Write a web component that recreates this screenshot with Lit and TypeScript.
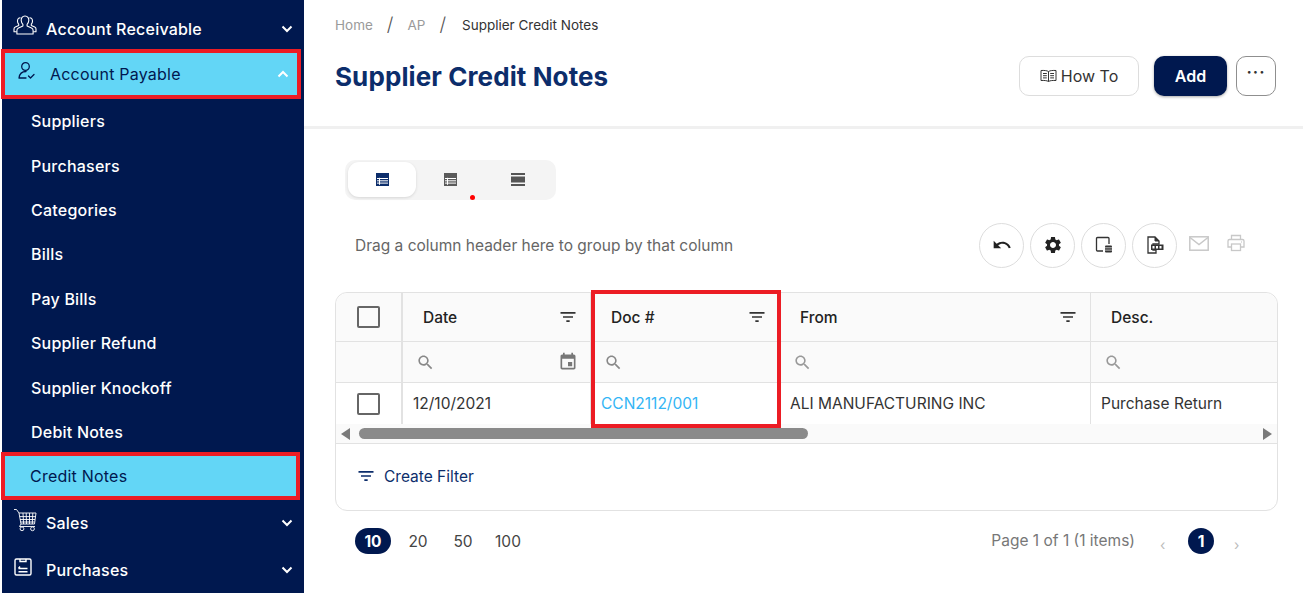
import { LitElement, html, css, svg } from "lit";
import { customElement } from "lit/decorators.js";

const filterP = "M10 18h4v-2h-4v2zM3 6v2h18V6H3zm3 7h12v-2H6v2z";
const searchP = "M15.5 14h-.79l-.28-.27C15.41 12.59 16 11.11 16 9.5 16 5.91 13.09 3 9.5 3S3 5.91 3 9.5 5.91 16 9.5 16c1.61 0 3.09-.59 4.23-1.57l.27.28v.79l5 4.99L20.49 19l-4.99-5zm-6 0C7.01 14 5 11.99 5 9.5S7.01 5 9.5 5 14 7.01 14 9.5 11.99 14 9.5 14z";
const eventP = "M17 12h-5v5h5v-5zM16 1v2H8V1H6v2H5c-1.11 0-1.99.9-1.99 2L3 19c0 1.1.89 2 2 2h14c1.1 0 2-.9 2-2V5c0-1.1-.9-2-2-2h-1V1h-2zm3 18H5V8h14v11z";
const undoP = "M12.5 8c-2.65 0-5.05.99-6.9 2.6L2 7v9h9l-3.62-3.62c1.39-1.16 3.16-1.88 5.12-1.88 3.54 0 6.55 2.31 7.6 5.5l2.37-.78C21.08 11.03 17.15 8 12.5 8z";
const gearP = "M19.14 12.94c.04-.3.06-.61.06-.94 0-.32-.02-.64-.07-.94l2.03-1.58c.18-.14.23-.41.12-.61l-1.92-3.32c-.12-.22-.37-.29-.59-.22l-2.39.96c-.5-.38-1.03-.7-1.62-.94l-.36-2.54c-.04-.24-.24-.41-.48-.41h-3.84c-.24 0-.43.17-.47.41l-.36 2.54c-.59.24-1.13.57-1.62.94l-2.39-.96c-.22-.08-.47 0-.59.22L2.74 8.87c-.12.21-.08.47.12.61l2.03 1.58c-.05.3-.09.63-.09.94s.02.64.07.94l-2.03 1.58c-.18.14-.23.41-.12.61l1.92 3.32c.12.22.37.29.59.22l2.39-.96c.5.38 1.03.7 1.62.94l.36 2.54c.05.24.24.41.48.41h3.84c.24 0 .44-.17.47-.41l.36-2.54c.59-.24 1.13-.56 1.62-.94l2.39.96c.22.08.47 0 .59-.22l1.92-3.32c.12-.22.07-.47-.12-.61l-2.01-1.58zM12 15.6c-1.98 0-3.6-1.62-3.6-3.6s1.62-3.6 3.6-3.6 3.6 1.62 3.6 3.6-1.62 3.6-3.6 3.6z";

const icon = (d: string, size: number, color: string) => html`<svg width=${size} height=${size} viewBox="0 0 24 24" fill=${color}><path d=${d}></path></svg>`;
const chev = (up: boolean) => html`<svg class="chev" width="12" height="8" viewBox="0 0 12 8" fill="none" stroke="#fff" stroke-width="2"><path d=${up ? "M1.5 6.5 6 2l4.5 4.5" : "M1.5 1.5 6 6l4.5-4.5"}></path></svg>`;

const iconReceivable = html`<svg width="24" height="24" viewBox="0 0 24 24" fill="none" stroke="#fff" stroke-width="1.1" stroke-linejoin="round"><path d="M12 2c-2.6 0-4 2-3.800 4.500.1 1.700.9 3 1.700 3.800v1.700l-4.400 2c-1.100.5-1.600 1.400-1.600 2.500v3.500h16.200V16.500c0-1.100-.5-2-1.600-2.500l-4.400-2v-1.700c.8-.8 1.600-2.100 1.700-3.800C16 4 14.600 2 12 2z"></path><path d="M7.500 3.800C5.600 3.900 4.400 5.400 4.500 7.400c.1 1.200.6 2.200 1.200 2.800v1.300L2.300 13c-.9.4-1.300 1.100-1.300 2v2.800h2.700M16.500 3.800c1.900.1 3.100 1.600 3 3.600-.1 1.200-.6 2.200-1.200 2.800v1.300l3.400 1.500c.9.4 1.300 1.100 1.300 2v2.800h-2.700"></path></svg>`;
const iconPayable = html`<svg width="20" height="20" viewBox="0 0 20 20" fill="none" stroke="#00184f" stroke-width="1.300" stroke-linecap="round" stroke-linejoin="round"><circle cx="8.500" cy="5.500" r="3.800"></circle><path d="M2 17c.5-4 3-6.500 7-6.500M2 17h7"></path><path d="M11.500 15l2 2 3.500-3.500"></path></svg>`;
const iconSales = html`<svg width="26" height="24" viewBox="0 0 26 24" fill="none" stroke="#fff" stroke-width=".9"><path d="M1 1.500h2.500l2.500 3.500M6 5h17l-1.500 11H8z"></path><path d="M6.500 8.600h16M7 11.500h15M7.500 14h14M10 5l.6 11M13.200 5l.3 11M16.500 5v11M19.800 5l-.5 11"></path><path d="M8 16l-1.500 2.500H22"></path><circle cx="9" cy="20.800" r="1.900"></circle><circle cx="19.500" cy="20.800" r="1.900"></circle></svg>`;
const iconPurch = html`<svg width="20" height="20" viewBox="0 0 20 20" fill="none" stroke="#fff" stroke-width="1.400"><rect x="2" y="2" width="16" height="16" rx="1.500"></rect><path d="M7 2v2.500h6V2M5.500 11.500h9M5.500 14.800h9M7 9.500l-1.500 2"></path></svg>`;
const iconBook = html`<svg width="17" height="14" viewBox="0 0 17 14" fill="none" stroke="#333" stroke-width="1"><path d="M8.500 2.500C7 1.500 4 1.300 1 1.500v10c3-.2 6 0 7.500 1 1.500-1 4.500-1.200 7.500-1v-10c-3-.2-6 0-7.500 1zM8.500 2.500v10"></path><path d="M3 4.500h3.800M3 6.700h3.800M3 8.900h3.800M10.200 4.500H14M10.200 6.700H14M10.200 8.900H14"></path></svg>`;
const gridIcon = (c: string) => html`<svg width="13" height="13" viewBox="0 0 13 13"><rect width="13" height="13" fill=${c}></rect><path d="M3.500 4.800v7M1 5.500h11M1 7.800h11M1 10.100h11" stroke="#fff" stroke-width="1" fill="none"></path></svg>`;
const rowsIcon = html`<svg width="14" height="13" viewBox="0 0 14 13" fill="#555"><rect width="14" height="2"></rect><rect y="3.500" width="14" height="6"></rect><rect y="11" width="14" height="2"></rect></svg>`;
const columnIcon = html`<svg width="18" height="18" viewBox="0 0 18 18" fill="none"><path d="M8 15H2.500a1 1 0 0 1-1-1V2.500a1 1 0 0 1 1-1H13a1 1 0 0 1 1 1V8" stroke="#333" stroke-width="1.300"></path><rect x="10" y="9.500" width="7" height="7" rx="1" fill="#333"></rect><path d="M10 11.800h7M10 14.100h7" stroke="#fff" stroke-width=".7"></path></svg>`;
const exportIcon = html`<svg width="18" height="18" viewBox="0 0 18 18"><path d="M2 1h7l4 4v3H7v6h3v3H2z" fill="none" stroke="#333" stroke-width="1.300"></path><path d="M9 1v4h4" fill="#333" stroke="#333"></path><rect x="5" y="8.500" width="12.500" height="5.500" fill="#333"></rect><path d="M6.500 10h2v2.500h-2zM10 10h2v2.500h-2zM13.500 10h2v2.500h-2z" fill="#fff"></path></svg>`;
const mailIcon = html`<svg width="20" height="15" viewBox="0 0 20 15" fill="none" stroke="#c8c8c8" stroke-width="1.500"><rect x=".8" y=".8" width="18.400" height="13.400"></rect><path d="M1 1.500l9 7 9-7"></path></svg>`;
const printIcon = html`<svg width="18" height="18" viewBox="0 0 18 18" fill="none" stroke="#c8c8c8" stroke-width="1.300"><path d="M4.500 5.500V1.500h9v4M4.500 13H1V7a1.500 1.500 0 0 1 1.500-1.500h13A1.500 1.500 0 0 1 17 7v6h-3.500"></path><rect x="4.500" y="10" width="9" height="6.500"></rect><path d="M14 8h.8"></path></svg>`;

const subs = ["Suppliers", "Purchasers", "Categories", "Bills", "Pay Bills", "Supplier Refund", "Supplier Knockoff", "Debit Notes"];

@customElement("app-root")
export class AppRoot extends LitElement {
  static styles = css`
    :host { display: block; width: 1303px; height: 593px; overflow: hidden; font-family: "Inter", "Liberation Sans", sans-serif; background: #fff; color: #333; }
    * { box-sizing: border-box; }
    .page { display: flex; height: 593px; }

    .side { width: 302px; flex: none; margin-left: 2px; background: #00184f; color: #fff; display: flex; flex-direction: column; margin-right: 0; font-size: 16px; letter-spacing: .22px; font-weight: 500; }
    .top { display: flex; align-items: center; height: 47px; padding: 0 11px 0 11px; position: relative; }
    .top .ic { width: 33px; display: flex; justify-content: flex-start; margin-top: -6px; }
    .top .lbl { flex: 1; }
    .top.first { height: 49px; padding-top: 9px; }
    .sales { margin-top: 0; }
    .active { background: #63d6f6; color: #00184f; border: 4px solid #ec1c24; margin-left: -1px; }
    .top.active { height: 51px; padding-left: 12px; font-weight: 400; width: 300px; padding-right: 8px; margin-top: 0; }
    .subs { padding-top: 0; }
    .sub { display: flex; align-items: center; height: 44.400px; padding-left: 29px; }
    .sub.active { height: 48px; padding-left: 25px; width: 299px; font-weight: 400; margin-top: -2px; margin-bottom: 0; }

    .main { flex: 1; min-width: 0; display: flex; flex-direction: column; }
    .head { height: 129px; border-bottom: 3px solid #f0f0f0; padding: 16px 27px 0 31px; }
    .crumbs { display: flex; align-items: center; font-size: 13.500px; color: #9a9a9a; height: 17px; }
    .crumbs .sep { color: #555; font-size: 19px; margin: 0 14px; font-weight: 300; }
    .crumbs .cur { color: #333; margin-left: 2px; }
    .titlebar { display: flex; align-items: center; margin-top: 19px; height: 48px; }
    h1 { flex: 1; margin: 0; font-size: 26px; font-weight: 700; color: #0c2d6b; letter-spacing: .1px; }
    .btn { height: 40px; display: flex; align-items: center; justify-content: center; border-radius: 10px; font-size: 16px; }
    .how { width: 120px; border: 1px solid #ddd; gap: 4px; color: #333; }
    .add { width: 73px; background: #00184f; color: #fff; font-weight: 600; margin-left: 15px; box-shadow: 0 1px 3px rgba(0,0,0,.35); }
    .more { width: 40px; border: 1px solid #8f8f8f; margin-left: 9px; color: #333; letter-spacing: 1px; padding-bottom: 8px; font-weight: 700; }

    .body { padding: 31px 27px 0 31px; }
    .toggle { margin-left: 10px; width: 211px; height: 40px; background: #f4f4f4; border-radius: 10px; display: flex; padding: 2px 3px; position: relative; }
    .toggle div { width: 68px; height: 35px; display: flex; align-items: center; justify-content: center; border-radius: 11px; }
    .toggle .on { background: #fff; box-shadow: 0 1px 3px rgba(0,0,0,.12); }
    .dot { position: absolute; left: 125px; top: 35px; width: 5px; height: 5px; background: #f00; border-radius: 50%; }

    .groupbar { display: flex; align-items: center; height: 46px; margin-top: 22px; padding-left: 20px; }
    .groupbar .t { flex: 1; font-size: 15.500px; color: #666; font-weight: 400; }
    .round { width: 45px; height: 45px; border: 1px solid #ddd; border-radius: 50%; display: flex; align-items: center; justify-content: center; margin-right: 6px; }
    .plain { display: flex; width: 20px; margin: 0 0 4px 6px; }
    .tools { display: flex; align-items: center; }

    .card { position: relative; margin-top: 24px; width: 943px; height: 219px; border: 1px solid #e2e2e2; border-radius: 12px; }
    .grid { display: grid; grid-template-columns: 67px 188px 189px 311px 1fr; grid-template-rows: 49px 41px 41px; border-bottom: 0; }
    .c { display: flex; align-items: center; border-bottom: 1px solid #e2e2e2; border-right: 1px solid #e2e2e2; font-size: 15.500px; position: relative; }
    .c.last { border-right: 0; }
    .h { background: #fafafa; font-weight: 500; color: #222; justify-content: space-between; padding: 0 12px 0 20px; }
    .h.first { border-top-left-radius: 12px; }
    .h.end { border-top-right-radius: 12px; }
    .f { background: #fafafa; padding: 0 12px 0 13px; justify-content: space-between; }
    .f svg { flex: none; }
    .d { border-bottom: 0; padding-left: 10px; color: #333; }
    .w2 { border-right-width: 2px; padding: 0; justify-content: center; }
    .box { width: 23px; height: 22px; border: 2px solid #666; border-radius: 2px; }
    .link { color: #33b5f5; }
    .hsb { height: 20px; background: #fafafa; border-bottom: 1px solid #e2e2e2; position: relative; display: flex; align-items: center; justify-content: space-between; padding: 0 5px; }
    .tri { width: 0; height: 0; border-top: 6px solid transparent; border-bottom: 6px solid transparent; }
    .tri.l { border-right: 9px solid #7a7a7a; }
    .tri.r { border-left: 9px solid #7a7a7a; }
    .thumb { position: absolute; left: 23px; top: 4px; width: 449px; height: 11px; background: #8a8a8a; border-radius: 6px; }
    .cf { display: flex; align-items: center; gap: 8px; padding: 22px 0 0 20px; color: #0c2d6b; font-size: 15.500px; }
    .redbox { position: absolute; left: 255px; top: -3px; width: 190px; height: 138px; border: 4px solid #ec1c24; pointer-events: none; }

    .pager { display: flex; align-items: center; width: 943px; height: 26px; margin-top: 17px; font-size: 15.500px; padding-left: 20px; }
    .size { width: 36px; height: 26px; display: flex; align-items: center; justify-content: center; color: #444; margin-right: 9px; }
    .size.on { background: #00184f; color: #fff; border-radius: 13px; font-weight: 700; margin-left: 0; }
    .pinfo { margin-left: auto; color: #777; margin-right: 25px; margin-top: -2px; }
    .pn { width: 26px; height: 26px; border-radius: 50%; background: #00184f; color: #fff; font-weight: 700; display: flex; align-items: center; justify-content: center; margin: 0 20px 0 20px; }
    .ar { color: #bbb; font-size: 14px; margin-top: 6px; width: 8px; display: flex; }
    .pager-right { display: flex; align-items: center; margin-right: 36px; }
  `;

  render() {
    return html`<div class="page">
      <nav class="side">
        <div class="top first"><span class="ic">${iconReceivable}</span><span class="lbl">Account Receivable</span>${chev(false)}</div>
        <div class="top active"><span class="ic">${iconPayable}</span><span class="lbl">Account Payable</span>${chev(true)}</div>
        <div class="subs">
          ${subs.map((s) => html`<div class="sub">${s}</div>`)}
          <div class="sub active">Credit Notes</div>
        </div>
        <div class="top sales"><span class="ic">${iconSales}</span><span class="lbl">Sales</span>${chev(false)}</div>
        <div class="top"><span class="ic">${iconPurch}</span><span class="lbl">Purchases</span>${chev(false)}</div>
      </nav>
      <main class="main">
        <header class="head">
          <div class="crumbs"><span>Home</span><span class="sep">/</span><span>AP</span><span class="sep">/</span><span class="cur">Supplier Credit Notes</span></div>
          <div class="titlebar">
            <h1>Supplier Credit Notes</h1>
            <div class="btn how">${iconBook}<span>How To</span></div>
            <div class="btn add">Add</div>
            <div class="btn more">···</div>
          </div>
        </header>
        <div class="body">
          <div class="toggle"><div class="on">${gridIcon("#0c2d6b")}</div><div>${gridIcon("#5a5a5a")}</div><div>${rowsIcon}</div><span class="dot"></span></div>
          <div class="groupbar">
            <span class="t">Drag a column header here to group by that column</span>
            <div class="tools">
              <span class="round">${icon(undoP, 20, "#222")}</span>
              <span class="round">${icon(gearP, 20, "#222")}</span>
              <span class="round">${columnIcon}</span>
              <span class="round">${exportIcon}</span>
              <span class="plain">${mailIcon}</span>
              <span class="plain" style="margin-left:18px;margin-right:29px">${printIcon}</span>
            </div>
          </div>
          <section class="card">
            <div class="grid">
              <div class="c h first w2"><span class="box"></span></div>
              <div class="c h"><span>Date</span>${icon(filterP, 20, "#333")}</div>
              <div class="c h"><span>Doc #</span>${icon(filterP, 20, "#333")}</div>
              <div class="c h"><span>From</span>${icon(filterP, 20, "#333")}</div>
              <div class="c h last end"><span>Desc.</span></div>
              <div class="c f w2"></div>
              <div class="c f">${icon(searchP, 19, "#888")}${icon(eventP, 20, "#777")}</div>
              <div class="c f">${icon(searchP, 19, "#888")}</div>
              <div class="c f">${icon(searchP, 19, "#999")}</div>
              <div class="c f last">${icon(searchP, 19, "#999")}</div>
              <div class="c d w2"><span class="box"></span></div>
              <div class="c d">12/10/2021</div>
              <div class="c d link">CCN2112/001</div>
              <div class="c d">ALI MANUFACTURING INC</div>
              <div class="c d last">Purchase Return</div>
            </div>
            <div class="hsb"><span class="tri l"></span><span class="thumb"></span><span class="tri r"></span></div>
            <div class="cf">${icon(filterP, 20, "#0c2d6b")}<span>Create Filter</span></div>
            <div class="redbox"></div>
          </section>
          <div class="pager">
            <span class="size on" style="margin-left:0">10</span><span class="size">20</span><span class="size">50</span><span class="size">100</span>
            <span class="pinfo">Page 1 of 1 (1 items)</span>
            <div class="pager-right"><span class="ar">‹</span><span class="pn">1</span><span class="ar">›</span></div>
          </div>
        </div>
      </main>
    </div>`;
  }
}
